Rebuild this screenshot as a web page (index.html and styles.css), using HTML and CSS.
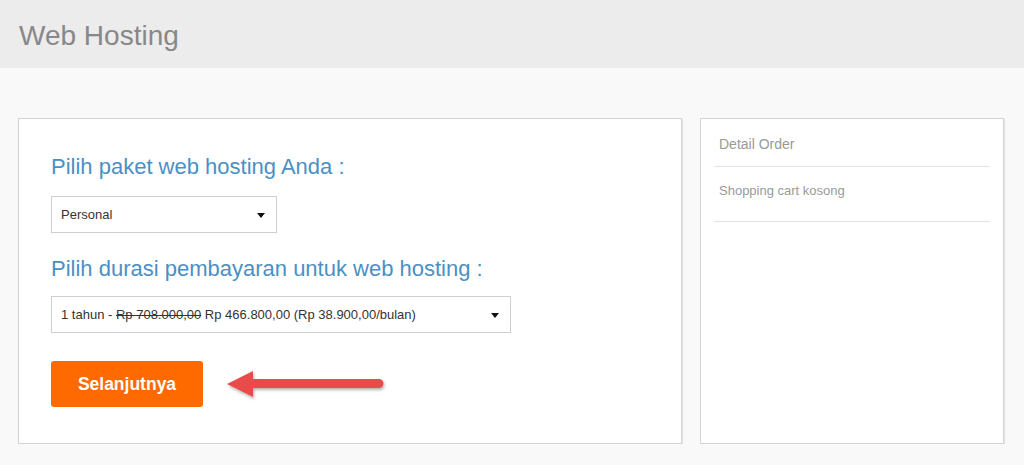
FILE: index.html
```html
<!DOCTYPE html>
<html lang="id">

<head>
    <meta charset="UTF-8">
    <title>Web Hosting</title>
    <link rel="stylesheet" href="styles.css">
</head>

<body>
    <header class="page-header">
        <h1 class="page-title">Web Hosting</h1>
    </header>
    <div class="content">
        <div class="order-card">
            <h2 class="step-title">Pilih paket web hosting Anda :</h2>
            <div class="select select-plan">
                <span>Personal</span>
                <span class="caret"></span>
            </div>
            <h2 class="step-title">Pilih durasi pembayaran untuk web hosting :</h2>
            <div class="select select-period">
                <span>1 tahun - <s>Rp 708.000,00</s> Rp 466.800,00 (Rp 38.900,00/bulan)</span>
                <span class="caret"></span>
            </div>
            <div class="action-row">
                <button class="button">Selanjutnya</button>
                <svg class="hint-arrow" width="164" height="40" viewBox="0 0 164 40">
                    <defs>
                        <filter id="arrow-shadow" x="-10%" y="-30%" width="120%" height="160%">
                            <feDropShadow dx="1" dy="2" stdDeviation="1.5" flood-color="#000" flood-opacity="0.3" />
                        </filter>
                    </defs>
                    <g filter="url(#arrow-shadow)" fill="#e84c48">
                        <path d="M2 18 L28 5 L28 13 L154 13 A4.5 4.5 0 0 1 154 22 L28 22 L28 31 Z" />
                    </g>
                </svg>
            </div>
        </div>
        <div class="summary-card">
            <div class="summary-title">Detail Order</div>
            <div class="summary-empty">Shopping cart kosong</div>
        </div>
    </div>
</body>

</html>
```

FILE: styles.css
```css
body {
    font-family: 'Liberation Sans', Arial, sans-serif;
    margin: 0;
    padding: 0;
    background: #f9f9f9;
    color: #333;
}

.page-header {
    background: #ececec;
    height: 68px;
    padding: 3px 19px 0;
    box-sizing: border-box;
}

.page-title {
    margin: 0;
    font-size: 28px;
    font-weight: normal;
    line-height: 65px;
    color: #888;
}

.content {
    display: flex;
    gap: 18px;
    padding: 50px 20px 0 18px;
}

.order-card,
.summary-card {
    background: #fff;
    border: 1px solid #d4d4d4;
    box-shadow: 1px 1px 1px rgba(0, 0, 0, 0.08);
    height: 326px;
    box-sizing: border-box;
}

.order-card {
    width: 664px;
    padding: 33px 32px 0 32px;
}

.summary-card {
    width: 304px;
    padding: 15px 13px 0 13px;
}

.step-title {
    margin: 0;
    font-size: 22px;
    font-weight: normal;
    line-height: 30px;
    color: #4a90c4;
}

.select {
    display: flex;
    align-items: center;
    justify-content: space-between;
    height: 37px;
    box-sizing: border-box;
    border: 1px solid #cfcfcf;
    padding: 0 11px 0 9px;
    font-size: 13px;
    color: #333;
}

.select s {
    text-decoration-thickness: 1px;
}

.select-plan {
    width: 226px;
    margin: 14px 0 21px;
}

.select-period {
    width: 460px;
    margin: 12px 0 28px;
}

.caret {
    width: 0;
    height: 0;
    border-left: 4px solid transparent;
    border-right: 4px solid transparent;
    border-top: 5px solid #111;
    margin-top: 2px;
}

.action-row {
    display: flex;
    align-items: center;
    gap: 22px;
}

.button {
    background: #ff6a00;
    color: #fff;
    border: none;
    border-radius: 3px;
    width: 152px;
    height: 46px;
    font-family: inherit;
    font-size: 17.5px;
    font-weight: bold;
    cursor: pointer;
}

.hint-arrow {
    margin-top: 4px;
}

.summary-title {
    padding: 0 5px 12px;
    line-height: 20px;
    font-size: 14px;
    color: #999;
    border-bottom: 1px solid #e3e3e3;
}

.summary-empty {
    padding: 14px 5px 20px;
    line-height: 20px;
    font-size: 13px;
    color: #999;
    border-bottom: 1px solid #e3e3e3;
}
```
